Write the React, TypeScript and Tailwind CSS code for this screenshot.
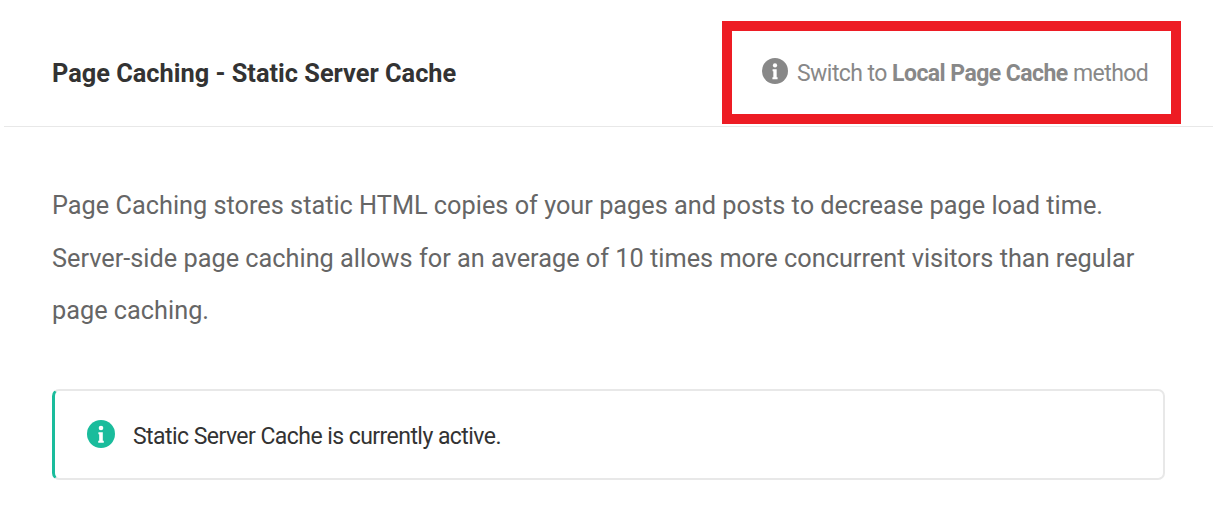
const font = "font-['Roboto','Liberation_Sans',sans-serif]";

function InfoIcon({ color, size }: { color: string; size: number }) {
  return (
    <svg width={size} height={size} viewBox="0 0 28 28" className="shrink-0">
      <circle cx="14" cy="14" r="14" fill={color} />
      <circle cx="14" cy="8" r="2.3" fill="#fff" />
      <path d="M11.4 12.2h4.4v8.6h1v2h-5.6v-2h1v-6.6h-.8z" fill="#fff" />
    </svg>
  );
}

export default function App() {
  return (
    <div className={`${font} h-[526px] w-[1220px] overflow-hidden bg-white`}>
      <div className="ml-1 mr-[7px] flex h-[127px] items-start justify-between border-b border-[#e8e8e8] pt-[21px]">
        <h1 className="mt-[35px] pl-12 text-[25.35px] leading-[34px] font-bold text-[#333333]">
          Page Caching - Static Server Cache
        </h1>
        <div className="mr-[32px] flex h-[103px] w-[459px] items-center border-[10px] border-[#ed1c24] pl-[30px]">
          <div className="-translate-y-[2px]">
            <InfoIcon color="#888888" size={26} />
          </div>
          <span className="ml-[9px] pt-[2px] text-[23px] leading-[32px] tracking-[-0.55px] text-[#888888]">
            Switch to <b className="font-bold">Local Page Cache</b> method
          </span>
        </div>
      </div>
      <div className="px-[52px] pt-[53px]">
        <p className="w-[1112px] text-[25.3px] leading-[52.7px] text-[#666666]">
          Page Caching stores static HTML copies of your pages and posts to decrease page load time. Server-side page
          caching allows for an average of 10 times more concurrent visitors than regular page caching.
        </p>
        <div className="mt-[51px] flex h-[91px] w-[1113px] items-center rounded-[7px] border-2 border-l-[3px] border-[#e8e8e8] border-l-[#1abc9c] pl-[32px]">
          <div className="-translate-y-[1px]">
            <InfoIcon color="#1abc9c" size={28} />
          </div>
          <span className="ml-[18px] pt-[4px] text-[23px] leading-[34px] tracking-[-0.55px] text-[#333333]">Static Server Cache is currently active.</span>
        </div>
      </div>
    </div>
  );
}
